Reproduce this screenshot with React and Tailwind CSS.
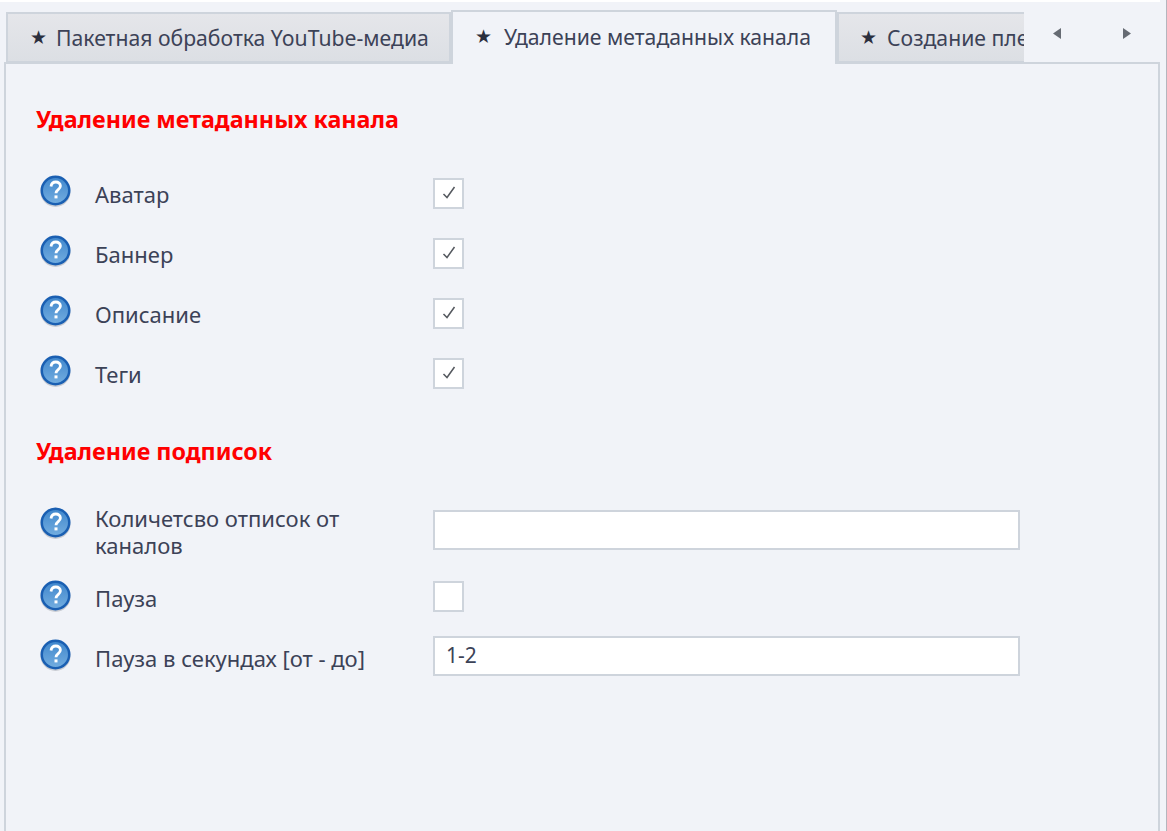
import React from "react";

const font = { fontFamily: '"Noto Sans", sans-serif' };

const HelpIcon = () => (
    <svg width="32" height="33" viewBox="0 0 32 33" className="shrink-0">
        <defs>
            <linearGradient id="helpFill" x1="0" y1="0" x2="0" y2="1">
                <stop offset="0" stopColor="#3f86cc" />
                <stop offset="1" stopColor="#74aee0" />
            </linearGradient>
        </defs>
        <circle cx="15.500" cy="17" r="15" fill="#c9ccd3" />
        <circle cx="15.500" cy="15.500" r="13.750" fill="url(#helpFill)" stroke="#1a5fb2" strokeWidth="2.500" />
        <path d="M11 11.500c.4-3 2.400-4.500 4.800-4.500 2.600 0 4.600 1.600 4.600 4 0 3.600-4.400 3.600-4.400 7.200" fill="none" stroke="#fff" strokeWidth="2.800" />
        <rect x="14.500" y="20.400" width="3" height="3" fill="#fff" />
    </svg>
);

const Check = () => (
    <svg width="16" height="16" viewBox="0 0 16 16">
        <path d="M2.500 9l3.500 3.500L13.500 2" fill="none" stroke="#55595f" strokeWidth="1.500" />
    </svg>
);

const Tab = ({ label, gap, className }) => (
    <div className={className}>
        <span className={`text-[#2b2f3d] text-[19px] ${gap}`}>★</span>
        <span>{label}</span>
    </div>
);

const Row = ({ label, className, iconClass, labelClass, children }) => (
    <div className={`flex items-center ${className}`}>
        <div className={`w-[55px] shrink-0 ${iconClass}`}><HelpIcon /></div>
        <div className={`w-[338px] shrink-0 pr-[30px] text-[22px] leading-[27px] text-[#3c4257] ${labelClass}`}>{label}</div>
        {children}
    </div>
);

const Box = ({ checked }) => (
    <div className="w-[31px] h-[31px] border-2 border-[#ced4dc] bg-white flex items-center justify-center">
        {checked && <Check />}
    </div>
);

const Field = ({ value, className }) => (
    <div className={`w-[587px] border-2 border-[#ced4dc] bg-white px-[11px] text-[21px] text-[#3c4257] flex items-center ${className}`}>
        {value}
    </div>
);

const App = () => {
    const metaRows = ["Аватар", "Баннер", "Описание", "Теги"];

    return (
        <div className="w-[1167px] h-[831px] overflow-hidden bg-[#f1f3f8] flex" style={font}>
            <div className="w-[1160px] shrink-0 flex flex-col">
                <div className="h-[2px] bg-white" />
                {/* tabs */}
                <div className="flex items-end h-[61px] pl-[6px] relative z-10 text-[21.2px] text-[#3c4257]">
                    <Tab
                        label="Пакетная обработка YouTube-медиа"
                        gap="mr-[9px]"
                        className="w-[445px] shrink-0 h-[51px] pl-[22px] flex items-center border-2 border-[#ced4dc] bg-gradient-to-b from-[#e5e6ea] to-[#dcdfe4] whitespace-nowrap"
                    />
                    <Tab
                        label="Удаление метаданных канала"
                        gap="mr-[12px]"
                        className="w-[386px] shrink-0 h-[54px] -mb-[1px] pl-[22px] pb-[3px] flex items-center border-2 border-b-0 border-[#ced4dc] bg-[#f1f3f8] whitespace-nowrap"
                    />
                    <Tab
                        label="Создание плейлистов"
                        gap="mr-[10px]"
                        className="w-[187px] shrink-0 h-[51px] pl-[21px] flex items-center overflow-hidden border-t-2 border-l-2 border-b-2 border-[#ced4dc] bg-gradient-to-b from-[#e5e6ea] to-[#dcdfe4] whitespace-nowrap"
                    />
                    <div className="flex-1 h-[51px] flex items-center pl-[27px] gap-[58px] -translate-y-[4px]">
                        <svg width="12" height="13" viewBox="0 0 12 13"><path d="M10 1v11L2 6.500z" fill="#666b73" /></svg>
                        <svg width="12" height="13" viewBox="0 0 12 13"><path d="M2 1v11l8-5.500z" fill="#666b73" /></svg>
                    </div>
                </div>
                {/* panel */}
                <div className="flex-1 ml-[4px] border-2 border-b-0 border-[#ced4dc] pl-[30px] -mt-[1px]">
                    <h2 className="mt-[40px] h-[30px] text-[23.300px] leading-[30px] font-bold text-[#ff0000] whitespace-nowrap">Удаление метаданных канала</h2>
                    <div className="mt-[29px] pl-[4px] flex flex-col">
                        {metaRows.map((label) => (
                            <Row key={label} label={label} className="h-[60px]" iconClass="-translate-y-[2px]" labelClass="translate-y-[1px]">
                                <Box checked />
                            </Row>
                        ))}
                    </div>
                    <h2 className="mt-[33px] h-[30px] text-[23.300px] leading-[30px] font-bold text-[#ff0000] whitespace-nowrap">Удаление подписок</h2>
                    <div className="mt-[33px] pl-[4px] flex flex-col">
                        <Row label="Количетсво отписок от каналов" className="h-[62px]" iconClass="-translate-y-[7px]" labelClass="translate-y-[2px]">
                            <Field className="h-[40px]" />
                        </Row>
                        <Row label="Пауза" className="h-[70px]" labelClass="translate-y-[2px]">
                            <Box />
                        </Row>
                        <Row label="Пауза в секундах [от - до]" className="h-[50px]" iconClass="-translate-y-[1px]" labelClass="translate-y-[2px]">
                            <Field value="1-2" className="h-[40px]" />
                        </Row>
                    </div>
                </div>
            </div>
            <div className="flex-1" />
            <div className="w-px bg-[#b4b5bd]" />
        </div>
    );
};

export default App;
